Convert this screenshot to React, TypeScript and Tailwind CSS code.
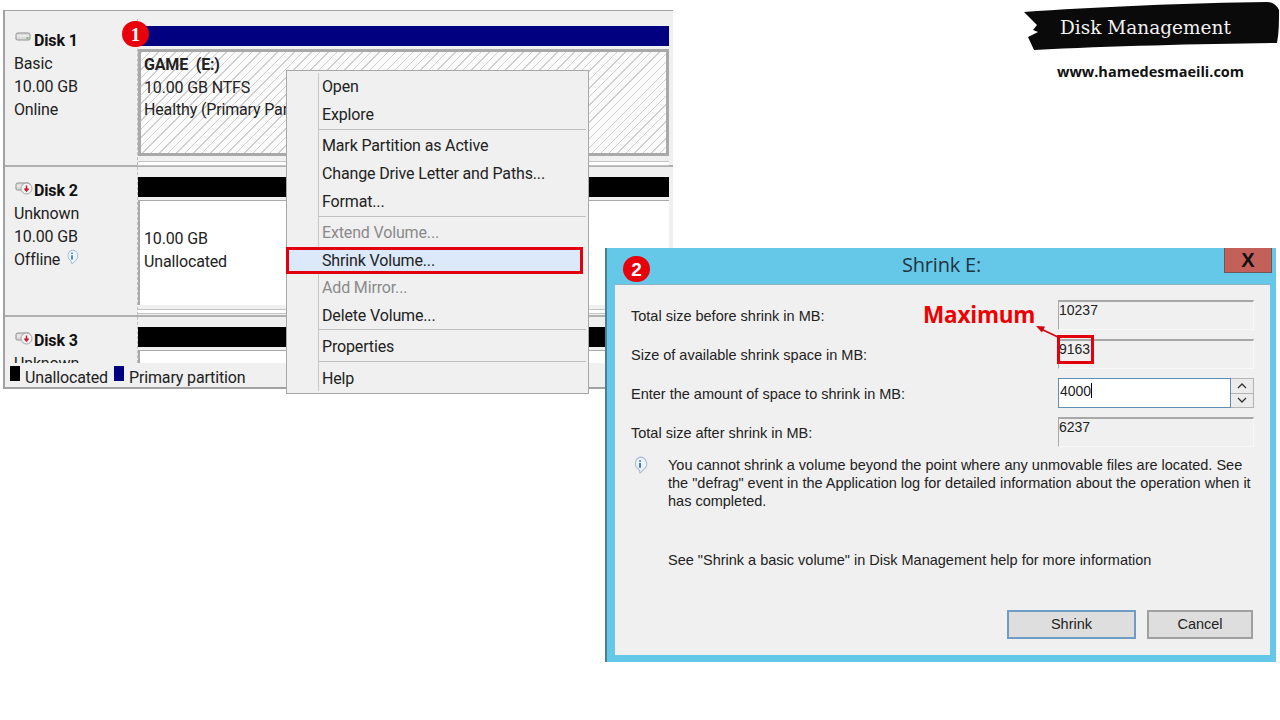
import React from 'react';

const uiFont = "font-['Roboto',sans-serif] text-[16px] tracking-[-0.15px] text-[#222]";

const menuGroups = [
  {
    pad: '',
    items: [
      { label: 'Open', h: 'h-[28px]' },
      { label: 'Explore', h: 'h-[28px]' },
    ],
  },
  {
    pad: 'pt-[2px]',
    items: [
      { label: 'Mark Partition as Active', h: 'h-[28px]' },
      { label: 'Change Drive Letter and Paths...', h: 'h-[28px]' },
      { label: 'Format...', h: 'h-[27px]' },
    ],
  },
  {
    pad: 'mt-px pt-[2px]',
    items: [
      { label: 'Extend Volume...', h: 'h-[28px]', disabled: true },
      { label: 'Shrink Volume...', h: 'h-[27px]' },
      { label: 'Add Mirror...', h: 'h-[28px]', disabled: true },
      { label: 'Delete Volume...', h: 'h-[27px]' },
    ],
  },
  { pad: 'pt-[3px]', items: [{ label: 'Properties', h: 'h-[28px]' }] },
  { pad: 'pt-[3px]', items: [{ label: 'Help', h: 'h-[28px]' }] },
];

function DiskIcon({ warn }: { warn?: boolean }) {
  return (
    <svg width="19" height="14" viewBox="0 0 19 14" className="shrink-0 -mt-[6px]">
      <path d="M2 3.5Q2 2 4 2h10q2 0 2 1.5V8q0 1-2 1H3.500Q2 9 2 8z" fill="#dcdcdc" stroke="#8f8f8f" />
      <path d="M3 5h12" stroke="#f7f7f7" />
      {warn ? (
        <>
          <circle cx="12.500" cy="7.500" r="5.500" fill="#f4f4f4" stroke="#a0a0a0" />
          <path d="M12.500 4.500v4.500M10.500 7.500l2 2.500 2-2.500" stroke="#cf1a2b" strokeWidth="1.5" fill="none" />
        </>
      ) : (
        <path d="M12.500 7h2" stroke="#58a858" strokeWidth="1.500" />
      )}
    </svg>
  );
}

function InfoIcon({ size = 16 }: { size?: number }) {
  return (
    <svg width={size} height={size} viewBox="0 0 16 16" className="shrink-0">
      <path
        d="M8 1a6 6 0 0 1 3.400 10.900L8 15l-1-3.100A6 6 0 0 1 8 1z"
        fill="#eef4fb"
        stroke="#a9bdd4"
      />
      <path d="M8 3.700v1.400M8 6.300v4.200" stroke="#2f6fc4" strokeWidth="1.600" />
    </svg>
  );
}

function Badge({ n, className }: { n: string; className: string }) {
  return (
    <div
      className={`absolute w-[27px] h-[26px] rounded-full bg-[#e8000b] flex items-center justify-center text-white text-[19px] leading-none font-bold ${className}`}
    >
      {n}
    </div>
  );
}

function DiskLabel({ name, warn, lines, pad }: { name: string; warn?: boolean; lines: React.ReactNode[]; pad: string }) {
  return (
    <div className={`w-[132px] shrink-0 pl-[9px] leading-[23px] ${pad}`}>
      <div className="flex items-center h-[23px] font-bold text-[#111]">
        <DiskIcon warn={warn} />
        <span className="ml-[1px]">{name}</span>
      </div>
      {lines.map((line, i) => (
        <div key={i} className="h-[23px]">
          {line}
        </div>
      ))}
    </div>
  );
}

function Separator() {
  return <div className="h-[5px] border-y border-[#c4c4c4] bg-white" />;
}

function ReadField({ value }: { value: string }) {
  return (
    <div className="w-[196px] h-[30px] border-t-2 border-l border-[#a8a8a8] border-b border-r border-b-[#f8f8f8] border-r-[#f8f8f8] leading-[17px] text-[14px] text-[#222]">
      {value}
    </div>
  );
}

function FieldRow({ label, children }: { label: string; children: React.ReactNode }) {
  return (
    <div className="flex items-center justify-between h-[30px]">
      <span className="pt-[3px] text-[14.5px]">{label}</span>
      {children}
    </div>
  );
}

export default function App() {
  return (
    <div className="relative w-[1280px] h-[720px] bg-white overflow-hidden">
      {/* disk management window */}
      <div className={`absolute left-[3px] top-[10px] w-[670px] h-[379px] bg-[#f0f0f0] border-l-2 border-t border-b-2 border-[#a2a2a2] ${uiFont}`}>
        <div className="h-[8px]" />
        {/* Disk 1 */}
        <div className="flex h-[148px] border-b-2 border-[#b0b0b0]">
          <DiskLabel name="Disk 1" pad="pt-[10px]" lines={['Basic', '10.00 GB', 'Online']} />
          <div className="w-[532px] pt-[7px] border-l border-dashed border-[#c0c0c0]">
            <div className="h-[20px] bg-[#000080]" />
            <div className="mt-[3px] h-[107px] border-[3px] border-[#a9a9a9] pl-[3px] pt-[2px] leading-[22.5px] bg-[repeating-linear-gradient(135deg,#cfcfcf_0,#cfcfcf_1px,#fbfbfb_1px,#fbfbfb_6px)]">
              <div className="font-bold">GAME&nbsp; (E:)</div>
              <div>10.00 GB NTFS</div>
              <div>Healthy (Primary Partition)</div>
            </div>
            <div className="mt-[5px]">
              <Separator />
            </div>
          </div>
        </div>
        {/* Disk 2 */}
        <div className="flex h-[150px] border-b-2 border-[#b0b0b0]">
          <DiskLabel
            name="Disk 2"
            warn
            pad="pt-[12px]"
            lines={[
              'Unknown',
              '10.00 GB',
              <span className="flex items-center gap-[4px]">
                Offline
                <span className="-mt-[5px]">
                  <InfoIcon />
                </span>
              </span>,
            ]}
          />
          <div className="w-[532px] pt-[10px] border-l border-dashed border-[#c0c0c0]">
            <div className="h-[20px] bg-black" />
            <div className="mt-[3px] h-[105px] border-l-2 border-t border-[#a9a9a9] bg-white pl-[4px] pt-[26px] leading-[23px]">
              <div>10.00 GB</div>
              <div>Unallocated</div>
            </div>
            <div className="mt-[4px]">
              <Separator />
            </div>
          </div>
        </div>
        {/* Disk 3, cut off by the legend */}
        <div className="flex h-[46px] overflow-hidden">
          <DiskLabel name="Disk 3" warn pad="pt-[12px]" lines={['Unknown']} />
          <div className="w-[532px] pt-[10px] border-l border-dashed border-[#c0c0c0]">
            <div className="h-[20px] bg-black" />
            <div className="mt-[3px] h-[60px] border-l-2 border-t border-[#a9a9a9] bg-white" />
          </div>
        </div>
        {/* legend */}
        <div className="flex items-start h-[23px] pl-[5px] pt-[3px] leading-[23px] bg-[#f0f0f0]">
          <span className="w-[10px] h-[15px] bg-black mr-[5px]" />
          <span>Unallocated</span>
          <span className="w-[10px] h-[15px] bg-[#000080] ml-[6px] mr-[5px]" />
          <span>Primary partition</span>
        </div>
      </div>

      <Badge n="1" className="left-[122px] top-[21px] font-['Liberation_Serif',serif]" />

      {/* context menu */}
      <div className={`absolute left-[286px] top-[70px] w-[303px] h-[324px] bg-[#f0f0f0] border border-[#a8a8a8] pl-[32px] pr-[2px] pt-[2px] ${uiFont}`}>
        <div className="absolute left-[31px] top-[2px] bottom-[2px] w-px bg-[#c8c8c8]" />
        {menuGroups.map((group, gi) => (
          <div key={gi} className={`${group.pad} ${gi > 0 ? 'border-t border-[#c0c0c0]' : ''}`}>
            {group.items.map((item) => (
              <div
                key={item.label}
                className={`${item.h} flex items-center pl-[3px] ${item.disabled ? 'text-[#8a8a8a]' : ''}`}
              >
                {item.label}
              </div>
            ))}
          </div>
        ))}
      </div>
      {/* highlight over Shrink Volume */}
      <div className={`absolute left-[286px] top-[247px] w-[297px] h-[27px] border-[3px] border-[#e2000f] bg-[#dbe9fa] flex items-center pl-[33px] ${uiFont}`}>
        Shrink Volume...
      </div>

      {/* brand */}
      <svg width="260" height="50" viewBox="0 0 260 50" className="absolute left-[1022px] top-[2px]">
        <path
          d="M2 10 L15 23 L11 28 L16 30 L6 35 L12 48 C90 44 180 42 255 41 C257 30 257 20 257 8 C255 3 250 0 245 0 C170 1 70 5 2 10 Z"
          fill="#0a0a0a"
        />
      </svg>
      <div className="absolute left-[1060px] top-[15px] font-['DejaVu_Serif',serif] text-[18.5px] leading-[26px] text-[#f2f2f2]">
        Disk Management
      </div>
      <div className="absolute left-[1057px] top-[62px] font-['Open_Sans',sans-serif] font-bold text-[14.5px] leading-[20px] text-[#111]">
        www.hamedesmaeili.com
      </div>

      {/* shrink dialog */}
      <div className="absolute left-[605px] top-[248px] w-[671px] h-[414px] bg-[#66c8e9] border-l-2 border-[#4f7f93] font-['Liberation_Sans',sans-serif] text-[#222]">
        <div className="relative h-[36px] flex items-center justify-center">
          <span className="font-['Open_Sans',sans-serif] text-[20px] tracking-[-0.2px] text-[#1f3440] -mt-[3px]">Shrink E:</span>
          <div className="absolute right-[4px] top-0 w-[48px] h-[25px] bg-[#c4605a] border border-[#6e5a5a] border-t-0 flex items-center justify-center font-bold text-[20px] leading-none text-[#111]">
            X
          </div>
        </div>
        <div className="ml-[8px] mr-[6px] h-[371px] bg-[#f0f0f0] border-t border-[#8fb3c4] pl-[16px] pr-[16px] pt-[15px] relative">
          <div className="flex flex-col gap-[9px]">
            <FieldRow label="Total size before shrink in MB:">
              <ReadField value="10237" />
            </FieldRow>
            <FieldRow label="Size of available shrink space in MB:">
              <ReadField value="9163" />
            </FieldRow>
            <FieldRow label="Enter the amount of space to shrink in MB:">
              <div className="flex w-[196px] h-[30px]">
                <div className="flex-1 border border-[#5f8fb4] bg-white pl-[1px] leading-[25px] text-[14px]">
                  4000<span className="inline-block w-px h-[15px] bg-black align-[-2px]" />
                </div>
                <div className="w-[23px] flex flex-col border border-[#b4b4b4] border-l-0 text-[#333]">
                  <div className="flex-1 flex items-center justify-center border-b border-[#b4b4b4] bg-[#ececec]">
                    <svg width="10" height="6" viewBox="0 0 10 6"><path d="M1 5l4-4 4 4" fill="none" stroke="#333" strokeWidth="1.3" /></svg>
                  </div>
                  <div className="flex-1 flex items-center justify-center bg-[#ececec]">
                    <svg width="10" height="6" viewBox="0 0 10 6"><path d="M1 1l4 4 4-4" fill="none" stroke="#333" strokeWidth="1.3" /></svg>
                  </div>
                </div>
              </div>
            </FieldRow>
            <FieldRow label="Total size after shrink in MB:">
              <ReadField value="6237" />
            </FieldRow>
          </div>
          <div className="flex mt-[9px]">
            <InfoIcon size={18} />
            <div className="ml-[19px] text-[14.5px] leading-[18px] w-[600px]">
              You cannot shrink a volume beyond the point where any unmovable files are located. See the "defrag" event in the Application log for detailed information about the operation when it has completed.
            </div>
          </div>
          <div className="ml-[37px] mt-[41px] text-[14.5px] leading-[18px]">
            See "Shrink a basic volume" in Disk Management help for more information
          </div>
          <div className="absolute right-[17px] bottom-[16px] flex gap-[11px] text-[14.5px]">
            <div className="w-[129px] h-[29px] bg-[#dedede] border-2 border-[#6f9cc4] flex items-center justify-center pt-px">Shrink</div>
            <div className="w-[106px] h-[29px] bg-[#dedede] border-2 border-[#a0a0a0] flex items-center justify-center pt-px">Cancel</div>
          </div>
        </div>
      </div>

      <Badge n="2" className="left-[623px] top-[256px] font-['Liberation_Sans',sans-serif]" />

      {/* Maximum annotation */}
      <div className="absolute left-[923px] top-[301px] font-['Open_Sans',sans-serif] font-bold text-[22.5px] leading-[28px] tracking-[-0.2px] text-[#ee0000]">
        Maximum
      </div>
      <svg width="30" height="20" viewBox="0 0 30 20" className="absolute left-[1033px] top-[322px]">
        <path d="M27 16L8 7" stroke="#d8000c" strokeWidth="1.6" />
        <path d="M3 4l9 .5-3 6z" fill="#d8000c" />
      </svg>
      <div className="absolute left-[1057px] top-[335px] w-[37px] h-[29px] border-[3px] border-[#e2000f]" />
    </div>
  );
}
